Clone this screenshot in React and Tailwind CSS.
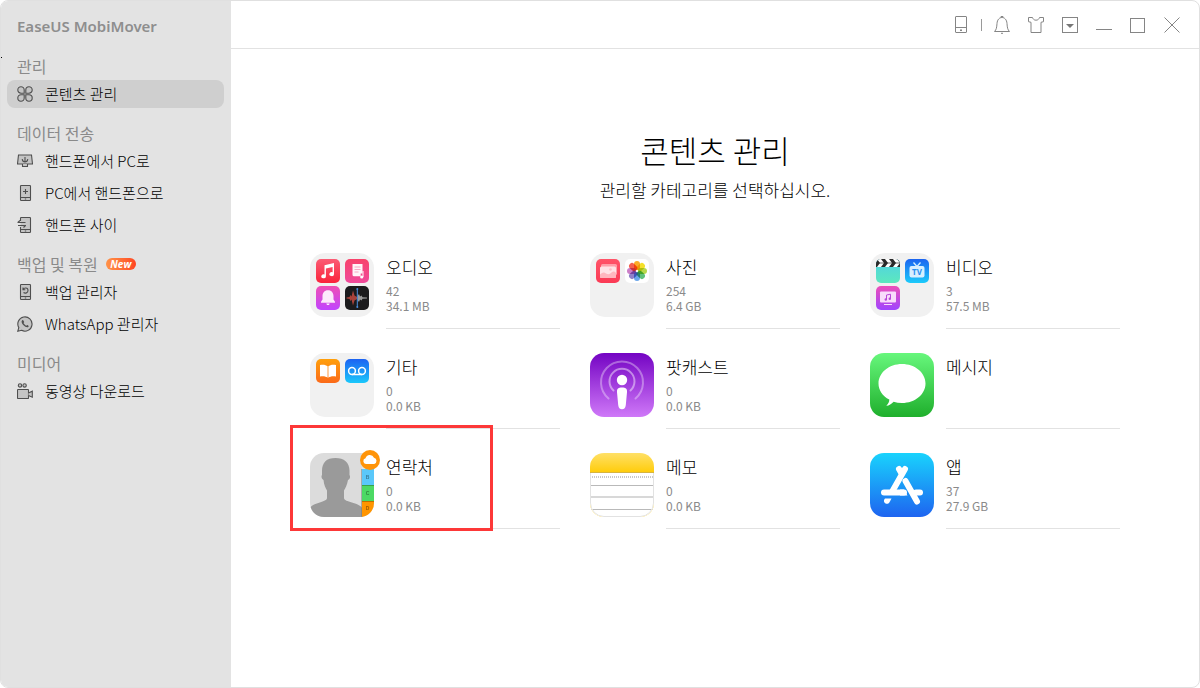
import { useState } from "react";

const sections = [
  {
    title: "관리",
    items: [{ id: "content", label: "콘텐츠 관리", icon: CloverIcon }],
  },
  {
    title: "데이터 전송",
    items: [
      { id: "toPc", label: "핸드폰에서 PC로", icon: ToPcIcon },
      { id: "toPhone", label: "PC에서 핸드폰으로", icon: ToPhoneIcon },
      { id: "between", label: "핸드폰 사이", icon: BetweenIcon },
    ],
  },
  {
    title: "백업 및 복원",
    badge: "New",
    items: [
      { id: "backup", label: "백업 관리자", icon: BackupIcon },
      { id: "whatsapp", label: "WhatsApp 관리자", icon: WhatsAppIcon },
    ],
  },
  {
    title: "미디어",
    items: [{ id: "video", label: "동영상 다운로드", icon: CameraIcon }],
  },
];

const categories = [
  { name: "오디오", count: "42", size: "34.1 MB", icon: AudioFolder },
  { name: "사진", count: "254", size: "6.4 GB", icon: PhotoFolder },
  { name: "비디오", count: "3", size: "57.5 MB", icon: VideoFolder },
  { name: "기타", count: "0", size: "0.0 KB", icon: OtherFolder },
  { name: "팟캐스트", count: "0", size: "0.0 KB", icon: PodcastIcon },
  { name: "메시지", icon: MessageIcon },
  { name: "연락처", count: "0", size: "0.0 KB", icon: ContactIcon, marked: true },
  { name: "메모", count: "0", size: "0.0 KB", icon: NotesIcon },
  { name: "앱", count: "37", size: "27.9 GB", icon: AppStoreIcon },
];

/* Sidebar icons */

function SideIcon({ children }) {
  return (
    <svg
      className="size-4 shrink-0"
      viewBox="0 0 16 16"
      fill="#c4c4c4"
      stroke="#4f4f4f"
      strokeWidth="1.1"
      aria-hidden="true"
    >
      {children}
    </svg>
  );
}

function CloverIcon() {
  return (
    <SideIcon>
      <path d="M7.2 7.2H4A3.2 3.2 0 1 1 7.2 4z" />
      <path d="M8.8 7.2H12A3.2 3.2 0 1 0 8.8 4z" />
      <path d="M7.2 8.8H4A3.2 3.2 0 1 0 7.2 12z" />
      <path d="M8.8 8.8H12A3.2 3.2 0 1 1 8.8 12z" />
    </SideIcon>
  );
}

function ToPcIcon() {
  return (
    <SideIcon>
      <path d="M1.5 2h13l1 9H.5z" />
      <path d="M5.500 11v2.500h5V11" />
      <path d="M8 4v5M5.200 6.200C5.500 8.200 6.500 9 8 9s2.500-.8 2.800-2.800" fill="none" />
    </SideIcon>
  );
}

function ToPhoneIcon() {
  return (
    <SideIcon>
      <rect x="3.500" y=".5" width="10" height="15" rx=".8" />
      <path d="M3.500 12.500h10M8.500 4v5M6 6.500h5M7.800 14h1.400" fill="none" />
    </SideIcon>
  );
}

function BetweenIcon() {
  return (
    <SideIcon>
      <path d="M3.500 4V1.300q0-.8.8-.8h8.400q.8 0 .8.8v13.400q0 .8-.8.8H4.300q-.8 0-.8-.8V10" />
      <path d="M3.500 12.500h10M7.800 14h1.400M.5 5.500h8M3 3.500 .8 5.500M1 8.500h8M8.500 8.500 6.500 10.500" fill="none" />
    </SideIcon>
  );
}

function BackupIcon() {
  return (
    <SideIcon>
      <rect x="3.500" y=".5" width="10" height="15" rx=".8" />
      <path d="M3.500 12.500h10M7.800 14h1.400M6 3.500v2.300h2.300M6.200 5.500C7 3.500 11 3.300 11 6.500c0 2.500-2.800 3.200-4.500 2" fill="none" />
    </SideIcon>
  );
}

function WhatsAppIcon() {
  return (
    <SideIcon>
      <path d="M.8 15.200 1.800 11.600A7.100 7.100 0 1 1 4.600 14.300z" />
      <path
        d="M5.200 4.200c-1.300 1.200-.4 3.400 1.300 5.100s3.900 2.600 5 1.400c.6-.7-.4-1.400-1.300-1.700l-.9.8C8.200 9.400 7 8.200 6.500 7.100l.7-.9c-.3-1-1.100-2.600-2-2z"
        fill="#4f4f4f"
        stroke="none"
      />
    </SideIcon>
  );
}

function CameraIcon() {
  return (
    <SideIcon>
      <circle cx="3" cy="2.400" r="1.700" />
      <circle cx="7.600" cy="2.400" r="1.700" />
      <rect x=".5" y="6.500" width="11" height="9" rx=".6" />
      <path d="M11.500 10 15.300 8.200v6l-3.800-1.700" />
    </SideIcon>
  );
}

/* Title bar icons */

function BarIcon({ children }) {
  return (
    <svg
      className="size-[18px]"
      viewBox="0 0 18 18"
      fill="none"
      stroke="#858585"
      strokeWidth="1"
      aria-hidden="true"
    >
      {children}
    </svg>
  );
}

function BarButton({ label, children }) {
  return (
    <button aria-label={label} className="w-[34px] h-8 flex items-center justify-center">
      <BarIcon>{children}</BarIcon>
    </button>
  );
}

function TitleBar() {
  return (
    <header className="h-12 pt-px pr-2.5 flex items-center justify-end border-b border-[#e2e2e2]">
      <BarButton label="기기">
        <rect x="3.500" y=".5" width="11" height="16" rx=".5" />
        <path d="M3.500 11.500h11" />
        <path d="M8 13.500h2v1.500H8z" fill="#858585" stroke="none" />
      </BarButton>
      <span className="w-[7px] flex justify-center">
        <span className="w-px h-3 bg-[#9a9a9a]" />
      </span>
      <BarButton label="알림">
        <path d="M1.500 15.500h15c-2-2-2.200-4-2.500-8C13.700 3.500 11.500 1.500 9 1.500S4.300 3.500 4 7.500c-.3 4-.5 6-2.500 8zM8 1.500v-1h2v1M8 17.300h2" />
      </BarButton>
      <BarButton label="스킨">
        <path d="M1.500 1.500h4C6 3 7 4.200 9 4.200s3-1.200 3.500-2.700h4v4.200l-2.500.6v10.200H4V6.300l-2.500-.6z" />
      </BarButton>
      <BarButton label="메뉴">
        <rect x="1.500" y="1.500" width="15" height="15" />
        <path d="M5 8h8l-4 4z" fill="#777" stroke="none" />
      </BarButton>
      <BarButton label="최소화">
        <path d="M1 13.500h16" />
      </BarButton>
      <BarButton label="최대화">
        <rect x="1.500" y="2.500" width="14" height="14" />
      </BarButton>
      <BarButton label="닫기">
        <path d="M1.500 1.500l15 15M16.500 1.500l-15 15" />
      </BarButton>
    </header>
  );
}

/* Category icons */

function Folder({ children }) {
  return (
    <span className="size-16 py-1.5 pl-1.5 pr-[5px] rounded-[15px] bg-[#f1f1f1] grid grid-cols-2 content-start gap-x-[5px] gap-y-[3px]">
      {children}
    </span>
  );
}

function Tile({ id, from, to, children }) {
  return (
    <svg className="size-6" viewBox="0 0 24 24" aria-hidden="true">
      <defs>
        <linearGradient id={id} x1="0" y1="0" x2="0" y2="1">
          <stop offset="0" stopColor={from} />
          <stop offset="1" stopColor={to} />
        </linearGradient>
        <clipPath id={id + "-clip"}>
          <rect width="24" height="24" rx="5" />
        </clipPath>
      </defs>
      <g clipPath={`url(#${id}-clip)`}>
        <rect width="24" height="24" fill={`url(#${id})`} />
        {children}
      </g>
    </svg>
  );
}

function AudioFolder() {
  return (
    <Folder>
      <Tile id="music" from="#fb5c74" to="#fa233b">
        <path d="M8.500 6.200 18 4v11.200a2.300 2 0 1 1-1.400-1.900V8l-6.700 1.600v7.800a2.300 2 0 1 1-1.400-1.900z" fill="#fff" />
      </Tile>
      <Tile id="playlist" from="#f8436b" to="#ef4a9c">
        <path d="M7.500 5h10v9.500h-1.800v2.700H9q-1.500 0-1.500-1.500z" fill="#fff" opacity=".95" />
        <path d="M9.500 8h6M9.500 10.500h6M9.500 13h4" stroke="#f8a9c4" />
        <path d="M18 12v6" stroke="#fff" />
        <circle cx="16.700" cy="18" r="1.600" fill="#fff" />
      </Tile>
      <Tile id="ring" from="#f04fb4" to="#c044ff">
        <path d="M12 4.200c-3.700 0-5.500 2.700-5.500 6v3.300L5 15.800v1h14v-1l-1.500-2.300v-3.300c0-3.300-1.800-6-5.500-6z" fill="#fce9fb" />
        <path d="M10.300 17.600h3.400q-.3 1.500-1.700 1.500t-1.700-1.500z" fill="#fff" />
      </Tile>
      <Tile id="memo" from="#1b1b1d" to="#1b1b1d">
        <path d="M1.500 11.500 4.500 11 5.500 9l1 1.500L8 4.500l1.500 5 2.500 1.500v2l-2.500 1.500L8 19.500 6.500 13.500l-1 1.500-1-2-3-.5z" fill="#a8423a" />
        <path d="M12.500 10l1.500-2 1 2.500 1.500-1 1 1.800 4.500.3v.8l-4.500.3-1 1.800-1.500-1-1 2.500-1.500-2z" fill="#9a9a9a" />
        <path d="M12.300 3v18" stroke="#4b8fe0" />
        <circle cx="12.300" cy="3" r="1" fill="#4b8fe0" />
        <circle cx="12.300" cy="21" r="1" fill="#4b8fe0" />
      </Tile>
    </Folder>
  );
}

const petals = ["#fbab27", "#f5e02a", "#b5d84a", "#5ec07a", "#6aa5ea", "#8f80c8", "#cc7fc8", "#f4604f"];

function PhotoFolder() {
  return (
    <Folder>
      <Tile id="album" from="#ff5468" to="#fb3a55">
        <rect x="5" y="5" width="16" height="11" rx="1.500" fill="#ff9fa9" />
        <rect x="4" y="7.500" width="16" height="11.500" rx="1.500" fill="#ffe3e6" />
        <path d="M4 15.500q3.500-3.500 6-1 3 2 5.500-1 2.500-2 4.500.5v3.500q0 1.500-1.500 1.500h-13Q4 19 4 17.500z" fill="#ffb6be" />
        <circle cx="14.500" cy="10.500" r="1.300" fill="#ffc0c7" />
      </Tile>
      <Tile id="photos" from="#fff" to="#fff">
        {petals.map((color, i) => (
          <rect
            key={color}
            className="mix-blend-multiply"
            x="9"
            y="2"
            width="6"
            height="9"
            rx="3"
            fill={color}
            transform={`rotate(${i * 45} 12 12)`}
          />
        ))}
      </Tile>
    </Folder>
  );
}

function VideoFolder() {
  return (
    <Folder>
      <Tile id="clap" from="#4fd0e6" to="#5ce8bd">
        <path d="M0 0h24v8H0z" fill="#2a2a2a" />
        <path d="M1 0h4l3 4-3 4H1l3-4zM9 0h4l3 4-3 4H9l3-4zM17 0h4l3 4-3 4h-4l3-4z" fill="#fff" />
        <path d="M0 4h24" stroke="#2a2a2a" strokeWidth=".7" />
      </Tile>
      <Tile id="tv" from="#1c64f0" to="#1ccbfb">
        <path d="M8.500 3.500 12 7.500l3.500-4" stroke="#d7efff" strokeWidth="1.300" fill="none" />
        <rect x="4.500" y="7" width="15" height="11.500" rx="2" fill="#d7efff" />
        <text x="12" y="16" textAnchor="middle" fontSize="8" fontWeight="700" fontFamily="Noto Sans, sans-serif" fill="#2890f0">
          TV
        </text>
      </Tile>
      <Tile id="mv" from="#ed4fb8" to="#9f45ff">
        <rect x="4" y="5.500" width="16" height="11" rx="1" fill="#f8dcfb" />
        <path d="M8 18.500h8" stroke="#f8dcfb" />
        <path d="M10.500 13.500V9l4-.8v4.500" stroke="#b849d8" fill="none" />
        <circle cx="9.800" cy="13.500" r="1.200" fill="#b849d8" />
        <circle cx="13.800" cy="12.800" r="1.200" fill="#b849d8" />
      </Tile>
    </Folder>
  );
}

function OtherFolder() {
  return (
    <Folder>
      <Tile id="books" from="#ff9f0a" to="#fb6a1a">
        <path d="M11.600 7.300C10 5.500 6.500 5.300 4 6v11.500c2.800-.7 6-.3 7.600 1.200zM12.400 7.300C14 5.500 17.500 5.300 20 6v11.500c-2.800-.7-6-.3-7.600 1.200z" fill="#fff" />
      </Tile>
      <Tile id="voicemail" from="#1c62f2" to="#1bc8fb">
        <g fill="none" stroke="#fff" strokeWidth="1.500">
          <circle cx="7" cy="12" r="3.400" />
          <circle cx="17" cy="12" r="3.400" />
          <path d="M7 15.400h10" />
        </g>
      </Tile>
    </Folder>
  );
}

function BigIcon({ id, from, to, stop = "1", children }) {
  return (
    <svg className="size-16" viewBox="0 0 64 64" aria-hidden="true">
      <defs>
        <linearGradient id={id} x1="0" y1="0" x2="0" y2={stop}>
          <stop offset="0" stopColor={from} />
          <stop offset="1" stopColor={to} />
        </linearGradient>
        <clipPath id={id + "-clip"}>
          <rect width="64" height="64" rx="14" />
        </clipPath>
      </defs>
      <g clipPath={`url(#${id}-clip)`}>
        <rect width="64" height="64" fill={`url(#${id})`} />
        {children}
      </g>
    </svg>
  );
}

function PodcastIcon() {
  return (
    <BigIcon id="podcast" from="#7404c3" to="#cf78f8">
      <g fill="none" stroke="#fff" strokeWidth="2" strokeLinecap="round">
        <path d="M18.500 45.500A21 21 0 1 1 45.500 45.500" opacity=".35" />
        <path d="M23.500 37.500A12.500 12.500 0 1 1 40.500 37.500" opacity=".45" />
      </g>
      <circle cx="32" cy="27" r="5.200" fill="#fff" />
      <path d="M32 34.500c3.500 0 5.200 1 5 4.500L35.800 52q-.4 4.200-3.800 4.200T28.200 52L27 39c-.2-3.500 1.500-4.500 5-4.500z" fill="#fff" />
    </BigIcon>
  );
}

function MessageIcon() {
  return (
    <BigIcon id="message" from="#67f77c" to="#1faf2c">
      <path d="M32 11c13 0 23.500 8.700 23.500 19.500S45 50 32 50q-4.500 0-8.400-1.200c-2 2.300-4.600 3.900-7.300 4 2-1.700 3-4 3-6.200C12.500 43 8.500 37 8.500 30.500 8.500 19.700 19 11 32 11z" fill="#fff" />
    </BigIcon>
  );
}

function ContactIcon() {
  return (
    <span className="relative size-16 block">
      <BigIcon id="contact" from="#dcdcdc" to="#dcdcdc">
        <path d="M25.500 5c8.500 0 14 4.500 14 12.500v4.500c1 1 .7 4-1.500 5-1 5-2.500 8-4 10.500v7.500c0 4.500 15 4 18.500 10.500V64H0v-9c3.500-6 17-5.500 17-10v-7.500c-1.500-2.500-3-5.500-3.500-10.500-2-1-2.500-4-1.500-5v-4C12 9.500 16.500 5 25.500 5z" fill="#9a9a9a" />
        <path d="M52 0h12v17H52z" fill="#e4e4e4" />
        <path d="M52 16h12v16H52z" fill="#5ac8fa" />
        <path d="M52 32h12v16H52z" fill="#4cd964" />
        <path d="M52 48h12v16H52z" fill="#ff9500" />
        <path d="M52 32.500h12M52 48.500h12" stroke="#000" opacity=".25" />
        <path d="M51.500 16v48" stroke="#777" opacity=".5" />
        <g fontSize="5" fontWeight="700" fontFamily="Liberation Sans, sans-serif" textAnchor="middle" fill="#000" opacity=".4">
          <text x="57.500" y="26">B</text>
          <text x="57.500" y="42">C</text>
          <text x="57.500" y="57">D</text>
        </g>
      </BigIcon>
      <svg className="absolute -top-[3px] -right-1.5 size-5" viewBox="0 0 20 20" aria-hidden="true">
        <circle cx="10" cy="10" r="10" fill="#ff9409" />
        <path d="M6 14a2.900 2.900 0 0 1-.5-5.700A4.500 4.500 0 0 1 14 7.800 3.200 3.200 0 0 1 14.200 14z" fill="#fff" />
      </svg>
    </span>
  );
}

function NotesIcon() {
  return (
    <BigIcon id="notes" from="#ffe067" to="#ffcb05" stop=".32">
      <path d="M0 20h64v44H0z" fill="#fff" />
      <path d="M0 19.500h64" stroke="#d6b440" />
      <path d="M0 24h64" stroke="#c9c9c9" strokeWidth="2" strokeDasharray="1 1" />
      <path d="M0 32.500h64M0 56.500h64" stroke="#b9b9b9" />
      <path d="M0 44h64" stroke="#d8d8d8" strokeWidth="2" />
      <path d="M.5 20v30A13.500 13.500 0 0 0 14 63.500h36A13.500 13.500 0 0 0 63.500 50V20" fill="none" stroke="#e2e2e2" />
    </BigIcon>
  );
}

function AppStoreIcon() {
  return (
    <BigIcon id="appstore" from="#19d3fd" to="#1e64f0">
      <g stroke="#fff" strokeWidth="6" strokeLinecap="round" fill="none">
        <path d="M35 16 22.500 38" />
        <path d="M29 16l2 3.500" />
        <path d="M14 39.500h20" />
        <path d="M46 39.500h4" />
        <path d="M35.500 28 47 48.500" />
      </g>
      <path d="M34 36.500 37.500 42.500H30v-6z" fill="#fff" />
      <path d="M15 45.500h6.500l-2 3.700c-2 3.400-7 .6-5.200-2.700z" fill="#fff" />
    </BigIcon>
  );
}

function Sidebar({ active, onSelect }) {
  return (
    <aside className="w-[230px] shrink-0 bg-[#e3e3e3] text-black pl-1.5 pr-[7px]">
      <h1 className="pt-[13px] px-2.5 text-[15px] leading-6 font-semibold text-[#8e8e8e] font-['Noto_Sans',sans-serif]">
        EaseUS MobiMover
      </h1>
      <nav className="pt-[3px]">
        {sections.map((section) => (
          <div key={section.title} className="pt-[15px]">
            <h2 className="px-2.5 mb-1 flex items-center gap-2 text-base leading-5 text-[#8a8a8a]">
              {section.title}
              {section.badge && (
                <span className="w-[30px] rounded-full bg-linear-to-r from-[#ff9248] to-[#ff4422] text-white text-[10px] leading-3 font-bold italic text-center font-['Open_Sans',sans-serif]">
                  {section.badge}
                </span>
              )}
            </h2>
            <div className="flex flex-col gap-1">
              {section.items.map(({ id, label, icon: Icon }) => (
                <button
                  key={id}
                  onClick={() => onSelect(id)}
                  className={`h-7 px-2.5 flex items-center gap-3 rounded-lg text-[15px] font-light text-left ${
                    active === id ? "bg-[#cfcfcf]" : "hover:bg-[#d9d9d9]"
                  }`}
                >
                  <Icon />
                  {label}
                </button>
              ))}
            </div>
          </div>
        ))}
      </nav>
    </aside>
  );
}

function CategoryCard({ name, count, size, icon: Icon, marked }) {
  return (
    <button className="relative flex items-start gap-3 text-left">
      <span className="shrink-0">
        <Icon />
      </span>
      <span className="flex-1 h-[76px] pt-0.5 border-b border-[#e2e2e2] flex flex-col">
        <span className="text-[17px] leading-6 mb-1 font-light text-black">{name}</span>
        {count && <span className="text-xs leading-[15px] text-[#8a8a8a]">{count}</span>}
        {size && <span className="text-xs leading-[15px] text-[#8a8a8a]">{size}</span>}
      </span>
      {marked && (
        <span className="absolute -left-5 -top-7 w-[203px] h-[106px] border-3 border-[#fd3838] pointer-events-none" />
      )}
    </button>
  );
}

export default function App() {
  const [active, setActive] = useState("content");

  return (
    <div className="relative min-h-screen flex rounded-lg overflow-hidden border border-[#e0e0e0] bg-white font-['Noto_Sans_CJK_KR',sans-serif]">
      <span className="absolute left-0 top-14 size-px bg-black" />
      <Sidebar active={active} onSelect={setActive} />

      <div className="flex-1 flex flex-col">
        <TitleBar />
        <main className="flex-1 pt-[81px] px-[79px]">
          <h2 className="text-[31px] leading-10 font-light text-center text-black">콘텐츠 관리</h2>
          <p className="mt-2 text-[17px] leading-6 font-light text-center text-black">
            관리할 카테고리를 선택하십시오.
          </p>
          <div className="mt-[51px] grid grid-cols-3 gap-x-[30px] gap-y-6">
            {categories.map((category) => (
              <CategoryCard key={category.name} {...category} />
            ))}
          </div>
        </main>
      </div>
    </div>
  );
}
